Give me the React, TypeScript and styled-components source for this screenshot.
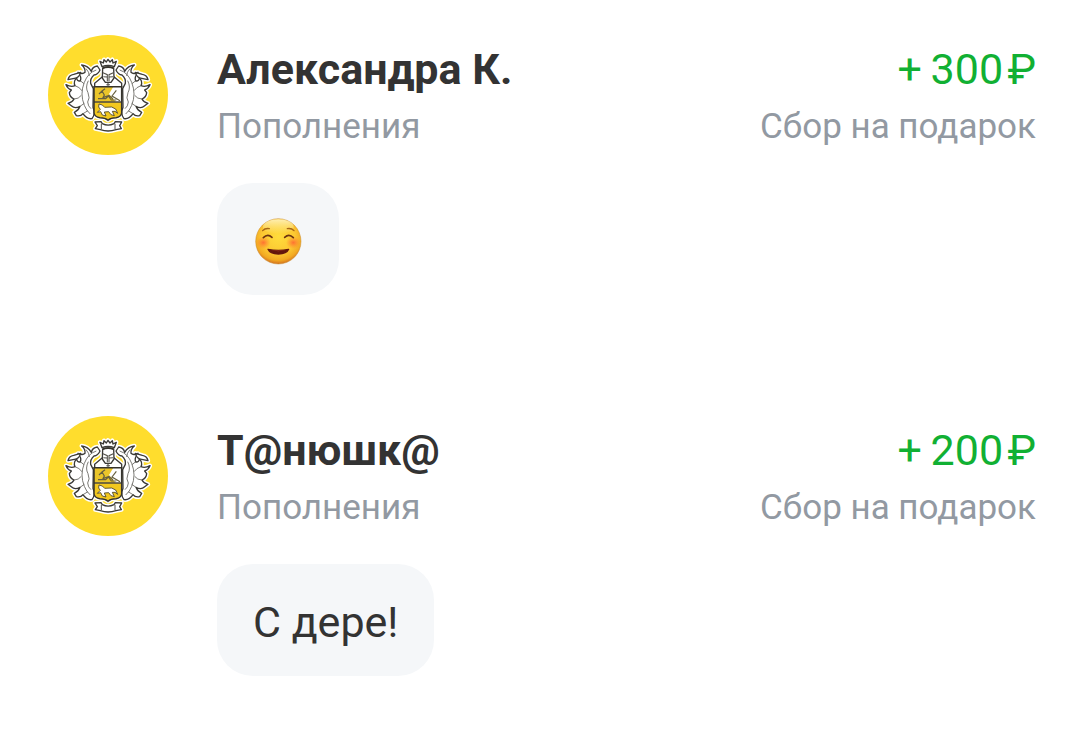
import React from 'react';
import styled, { createGlobalStyle } from 'styled-components';

const GlobalStyle = createGlobalStyle`
  * { box-sizing: border-box; }
  body {
    margin: 0;
    background: #fff;
    font-family: Roboto, "Liberation Sans", sans-serif;
    color: #333;
  }
`;

const Feed = styled.ul`
  list-style: none;
  margin: 0;
  padding: 35px 44px 64px 48px;
  display: flex;
  flex-direction: column;
  gap: 121px;
`;

const Operation = styled.li`
  display: grid;
  grid-template-columns: 120px 1fr;
  column-gap: 49px;
  align-items: start;
`;

const Avatar = styled.svg`
  display: block;
  width: 120px;
  height: 120px;
`;

const Details = styled.div`
  display: flex;
  flex-direction: column;
  align-items: flex-start;
  gap: 28px;
`;

const Summary = styled.div`
  width: 100%;
  min-height: 120px;
  padding-top: 6px;
  display: flex;
  justify-content: space-between;
`;

const Column = styled.div<{ $end?: boolean }>`
  display: flex;
  flex-direction: column;
  align-items: ${(p) => (p.$end ? 'flex-end' : 'flex-start')};
  gap: 2px;
  white-space: nowrap;
`;

const Name = styled.h2`
  margin: 0;
  font-size: 43px;
  font-weight: 700;
  line-height: 56px;
`;

const Amount = styled.span`
  font-size: 43px;
  line-height: 56px;
  color: #11b033;
`;

const Caption = styled.span`
  font-size: 35px;
  line-height: 56px;
  color: #9299a2;
`;

const Message = styled.p`
  margin: 0;
  min-height: 112px;
  padding: 30px 36px 26px;
  border-radius: 36px;
  background: #f5f7f9;
  font-size: 43px;
  line-height: 56px;
  display: flex;
  align-items: center;
`;

const Emoji = styled.svg`
  display: block;
  width: 50px;
  height: 50px;
`;

const leaf =
  'M60 21 Q79 23 89 40 Q92 26 107 24 L115 36 Q109 50 97 51 Q85 61 87 76 L95 92 L94 148 Q103 166 91 182 Q75 184 64 167 Q57 176 44 173 L38 163 Q50 158 55 145 Q39 153 30 144 L19 136 Q32 133 37 123 Q24 118 23 104 L29 96 Q18 92 13 80 Q28 88 40 83 Q34 70 45 60 Q46 70 56 69 Q61 57 49 43 Q63 50 70 43 Q72 31 60 21 Z';
const sprig = 'M19 65 Q22 51 36 49 L57 43 Q52 60 38 61 Z';
const veins =
  'M104 36 Q79 44 68 73 Q54 108 68 142 Q74 158 86 168 M73 32 Q83 42 83 54 M57 69 L67 77 M40 83 Q53 87 61 98 M37 123 Q51 123 59 112 M55 145 L68 136 M64 167 L79 158 M80 68 Q70 88 79 104 Q86 121 78 132 Q79 145 88 152';
const collar = 'M124 55 L99 76 L99 86 L180 86 L180 76 L155 55 L139 74 Z';
const helmet =
  'M123 31 Q139 22 156 31 L157 60 L148 73 L131 73 L122 60 Z';
const crown =
  'M121 26 L115 10 L125 15 L127 5 L134 12 L139 4 L145 12 L152 5 L154 15 L164 10 L158 26 Q139 19 121 26 Z';
const shield = 'M97 86 H180 V165 Q178 177 163 179 Q147 179 139 187 Q131 179 115 179 Q99 177 97 165 Z';
const ribbon =
  'M100 192 L118 191 L122 197 Q139 206 157 197 L161 191 L180 192 L174 203 L179 212 L163 215 Q139 223 116 215 L101 212 L107 203 Z';

const Wings = () => (
  <>
    <path d={leaf} />
    <path d={sprig} />
    <g transform="translate(278 0) scale(-1 1)">
      <path d={leaf} />
      <path d={sprig} />
    </g>
  </>
);

const Crest = () => (
  <Avatar viewBox="0 0 360 360" role="img" aria-label="Герб банка">
    <circle cx="180" cy="180" r="180" fill="#ffdd2d" />
    <g transform="translate(41 69)">
      <g fill="#fff" stroke="#fff" strokeWidth="13" strokeLinejoin="round">
        <Wings />
        <path d={helmet} />
        <path d={crown} />
        <path d={collar} />
        <path d={shield} />
        <path d={ribbon} />
      </g>
      <g fill="#fff" stroke="#3b3a36" strokeWidth="4" strokeLinejoin="round">
        <Wings />
        <path d={collar} />
        <path d={helmet} />
        <path d={crown} />
        <path d={ribbon} />
      </g>
      <g fill="none" stroke="#66655f" strokeWidth="2.6">
        <path d={veins} />
        <path d={veins} transform="translate(278 0) scale(-1 1)" />
      </g>
      <path d={shield} fill="#fff" />
      <path d="M97 86 H155 L142 108 L162 131 H97 Z" fill="#eac52a" />
      <path d="M97 133 H180 V165 Q178 177 163 179 Q147 179 139 187 Q131 179 115 179 Q99 177 97 165 Z" fill="#f2c81f" />
      <path d="M112 138 L122 141 L129 148 L150 147 L162 153 L168 166 L160 160 L152 160 L158 173 L148 170 L141 161 L128 162 L133 174 L122 171 L117 161 L107 163 L116 154 L111 147 Z" fill="#fff" stroke="#4a4224" strokeWidth="2.6" />
      <path d="M112 108 L121 99 L128 111 L124 119 L142 112 L154 123 M109 122 H132 L140 114 L149 126 H164 M122 98 L130 92 M164 97 L151 114 L175 128" fill="none" stroke="#67603e" strokeWidth="3.6" />
      <path d="M97 132 H180" stroke="#35332c" strokeWidth="4" />
      <path d={shield} fill="none" stroke="#35332c" strokeWidth="4.5" />
      <path d="M124 44 L137 50 V70 M155 44 L142 50 V70 M125 56 L136 57 M154 56 L143 57 M134 80 H145 M139 74 V85" fill="none" stroke="#55534b" strokeWidth="3.2" />
      <path d="M122 31 Q139 24 157 31" fill="none" stroke="#35332c" strokeWidth="5" />
      <path d="M119 197 V213 M160 197 V213" stroke="#55534b" strokeWidth="3" />
    </g>
  </Avatar>
);

const SmilingFace = () => (
  <Emoji viewBox="0 0 150 150" role="img" aria-label="Улыбка">
    <defs>
      <radialGradient id="face" cx="50%" cy="40%" r="61%">
        <stop offset="0" stopColor="#ffdc3c" />
        <stop offset="0.6" stopColor="#fcc832" />
        <stop offset="0.85" stopColor="#f2a922" />
        <stop offset="1" stopColor="#cf6a20" />
      </radialGradient>
      <linearGradient id="shine" x1="0" y1="0" x2="0" y2="1">
        <stop offset="0" stopColor="#fff6c8" stopOpacity="0.85" />
        <stop offset="1" stopColor="#fff2a0" stopOpacity="0" />
      </linearGradient>
      <radialGradient id="blush">
        <stop offset="0" stopColor="#ff5b32" stopOpacity="0.8" />
        <stop offset="1" stopColor="#ff7a2e" stopOpacity="0" />
      </radialGradient>
    </defs>
    <circle cx="76" cy="76" r="68" fill="url(#face)" stroke="#c98a2a" strokeWidth="1.5" />
    <ellipse cx="76" cy="32" rx="46" ry="22" fill="url(#shine)" />
    <ellipse cx="31" cy="80" rx="22" ry="19" fill="url(#blush)" />
    <ellipse cx="121" cy="80" rx="22" ry="19" fill="url(#blush)" />
    <path d="M29 44 Q36 36 49 38 M123 44 Q116 36 103 38" fill="none" stroke="#a66516" strokeWidth="4" strokeLinecap="round" />
    <path d="M31 65 Q44 52 57 64 M95 64 Q108 52 121 65" fill="none" stroke="#6d3410" strokeWidth="5" strokeLinecap="round" />
    <path d="M45 100 Q76 107 107 100 Q101 114 76 114 Q51 114 45 100 Z" fill="#64170d" stroke="#64170d" strokeWidth="4" strokeLinejoin="round" />
    <path d="M54 102 Q76 107 98 102 Q76 109 54 102 Z" fill="#b74928" />
  </Emoji>
);

interface OperationData {
  name: string;
  amount: string;
  message: React.ReactNode;
}

const operations: OperationData[] = [
  { name: 'Александра К.', amount: '300', message: <SmilingFace /> },
  { name: 'Т@нюшк@', amount: '200', message: 'С дере!' },
];

export default function App() {
  return (
    <main>
      <GlobalStyle />
      <Feed>
        {operations.map((item) => (
          <Operation key={item.name}>
            <Crest />
            <Details>
              <Summary>
                <Column>
                  <Name>{item.name}</Name>
                  <Caption>Пополнения</Caption>
                </Column>
                <Column $end>
                  <Amount>+{'\u2009'}{item.amount}{'\u200a'}₽</Amount>
                  <Caption>Сбор на подарок</Caption>
                </Column>
              </Summary>
              <Message>{item.message}</Message>
            </Details>
          </Operation>
        ))}
      </Feed>
    </main>
  );
}
